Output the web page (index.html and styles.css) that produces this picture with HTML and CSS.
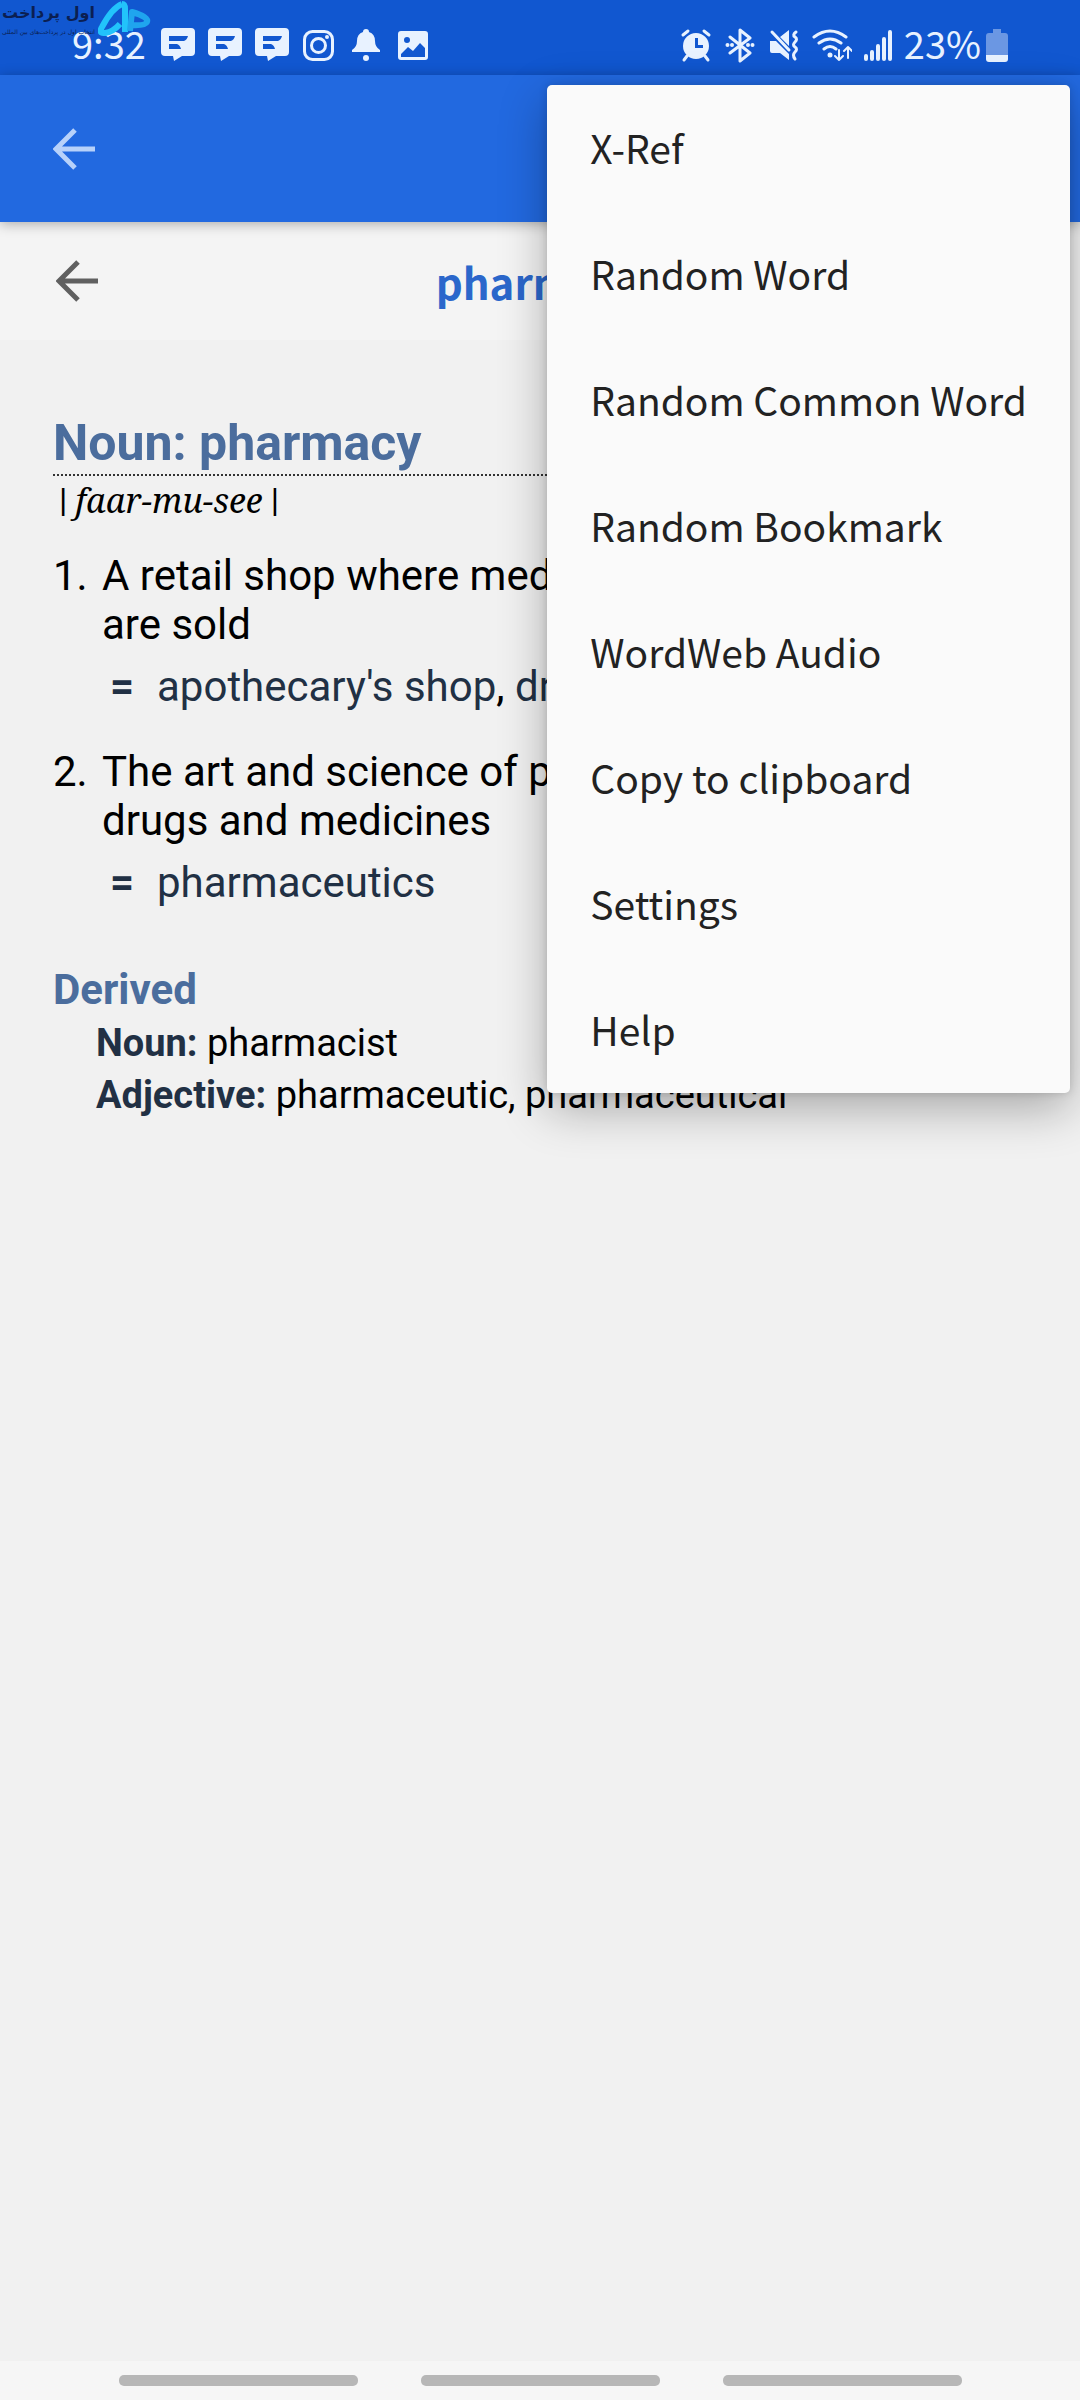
FILE: index.html
```html
<!DOCTYPE html>
<html lang="en">
<head>
  <meta charset="UTF-8">
  <meta name="viewport" content="width=device-width, initial-scale=1.0">
  <title>WordWeb - pharmacy</title>
  <link rel="stylesheet" href="styles.css">
</head>
<body>
  <div class="status-bar">
    <span class="time">9:32</span>
    <div class="notifications">
      <svg class="icon" viewBox="0 0 36 36"><path fill-rule="evenodd" d="M5 1h26q4 0 4 4v20q0 4-4 4H22l-8 5-1-5H5q-4 0-4-4V5q0-4 4-4zM9 9v5h15q3-1 4-5zM9 17v5h12q-1-4-4-5z"/></svg>
      <svg class="icon" viewBox="0 0 36 36"><path fill-rule="evenodd" d="M5 1h26q4 0 4 4v20q0 4-4 4H22l-8 5-1-5H5q-4 0-4-4V5q0-4 4-4zM9 9v5h15q3-1 4-5zM9 17v5h12q-1-4-4-5z"/></svg>
      <svg class="icon" viewBox="0 0 36 36"><path fill-rule="evenodd" d="M5 1h26q4 0 4 4v20q0 4-4 4H22l-8 5-1-5H5q-4 0-4-4V5q0-4 4-4zM9 9v5h15q3-1 4-5zM9 17v5h12q-1-4-4-5z"/></svg>
      <svg class="icon" viewBox="0 0 36 36">
        <rect class="line" x="3.5" y="4.500" width="28" height="28" rx="8"/>
        <circle class="line" cx="17.500" cy="18.500" r="7"/>
        <circle cx="26" cy="10" r="2"/>
      </svg>
      <svg class="icon" viewBox="0 0 36 36"><path d="M18 2a3 3 0 0 1 3 3q6 2 6 9 0 6 5 9v2H4v-2q5-3 5-9 0-7 6-9a3 3 0 0 1 3-3z"/><circle cx="18" cy="31" r="3"/></svg>
      <svg class="icon" viewBox="0 0 36 36"><path fill-rule="evenodd" d="M6 4h24q3 0 3 3v23q0 3-3 3H6q-3 0-3-3V7q0-3 3-3zM12 10a3 3 0 1 0 0 6 3 3 0 0 0 0-6zM6 27v3h24v-9l-5-5-7 8-5-4z"/></svg>
    </div>
    <div class="system">
      <svg class="icon alarm" viewBox="0 0 32 36">
        <path class="line" d="M3 8l5-4M29 8l-5-4M7 29l-3 4M25 29l3 4"/>
        <path fill-rule="evenodd" d="M16 6a13 13 0 1 0 0 26 13 13 0 0 0 0-26zM15 11h3v7h5v3h-8z"/>
      </svg>
      <svg class="icon bluetooth" viewBox="0 0 32 36">
        <path class="line" d="M6 10l20 16-10 8V3l10 8L6 26"/>
        <circle cx="3.500" cy="18" r="2"/><circle cx="8" cy="18" r="2"/><circle cx="24" cy="18" r="2"/><circle cx="28.500" cy="18" r="2"/>
      </svg>
      <svg class="icon mute" viewBox="0 0 32 36">
        <path d="M2 14h6l13 13v6l-9-7H4q-2 0-2-2zM12 10l9-7v16z"/>
        <path class="line" d="M4 5l17 18M28 5q-4 3-1 5t0 5 0 5 0 5 0 7"/>
      </svg>
      <svg class="icon wifi" viewBox="0 0 40 36">
        <path class="line" d="M2 10q16-12 32 0M7 16q11-8 22 0M12 22q6-5 12 0"/>
        <circle cx="18" cy="28" r="2.500"/>
        <path class="thin" d="M27 23v10M23 29l4 4 4-4M36 31V20M32 24l4-4 4 4"/>
      </svg>
      <svg class="icon signal" viewBox="0 0 28 36"><path class="line bold" d="M2 29v3M8 25v7M14 19v13M20 12v20M26 5v27"/></svg>
      <div class="charge">
        <span class="percent">23%</span>
        <svg class="icon battery" viewBox="0 0 22 36">
          <path class="empty" d="M7 2h8v4h4q3 0 3 3v19H0V9q0-3 3-3h4z"/>
          <path d="M0 28h22v4q0 3-3 3H3q-3 0-3-3z"/>
        </svg>
      </div>
    </div>
    <div class="watermark">
      <div class="watermark-text" lang="fa" dir="rtl">
        <span class="watermark-name">اول پرداخت</span>
        <span class="watermark-tagline">انتخاب اول در پرداخت‌های بین المللی</span>
      </div>
      <svg class="watermark-logo" viewBox="0 0 54 38">
        <path class="loop" d="M24 4q3 0 3 5v23M24 4Q14 8 4 27q-4 7 3 6 8-1 15-9"/>
        <path class="loop dark" d="M32 31l2-19q17 5 15 10-2 4-16 3"/>
      </svg>
    </div>
  </div>

  <header class="app-bar">
    <button class="back" aria-label="Back">
      <svg viewBox="0 0 42 42"><path d="M22 2L3 21l19 19M4 21h38"/></svg>
    </button>
  </header>

  <div class="word-bar">
    <button class="back" aria-label="Previous word">
      <svg viewBox="0 0 42 42"><path d="M22 2L3 21l19 19M4 21h38"/></svg>
    </button>
    <h1>pharmacy</h1>
  </div>

  <main class="entry">
    <h2>Noun: pharmacy</h2>
    <p class="pronunciation"><span>|</span><i>faar-mu-see</i><span>|</span></p>
    <ol class="senses">
      <li>
        <p>A retail shop where medicine and other articles are sold</p>
        <p class="synonyms"><b>=</b><span><a href="#">apothecary's shop</a>, <a href="#">drugstore</a></span></p>
      </li>
      <li>
        <p>The art and science of preparing and dispensing drugs and medicines</p>
        <p class="synonyms"><b>=</b><span><a href="#">pharmaceutics</a></span></p>
      </li>
    </ol>
    <h3>Derived</h3>
    <div class="derived">
      <p><b>Noun:</b> pharmacist</p>
      <p><b>Adjective:</b> pharmaceutic, pharmaceutical</p>
    </div>
  </main>

  <nav class="nav-bar">
    <button aria-label="Recent apps"></button>
    <button aria-label="Home"></button>
    <button aria-label="Go back"></button>
  </nav>

  <div class="menu" role="menu">
    <button role="menuitem">X-Ref</button>
    <button role="menuitem">Random Word</button>
    <button role="menuitem">Random Common Word</button>
    <button role="menuitem">Random Bookmark</button>
    <button role="menuitem">WordWeb Audio</button>
    <button role="menuitem">Copy to clipboard</button>
    <button role="menuitem">Settings</button>
    <button role="menuitem">Help</button>
  </div>
</body>
</html>
```
FILE: styles.css
```css
* {
  margin: 0;
  padding: 0;
  box-sizing: border-box;
}

body {
  position: relative;
  display: flex;
  flex-direction: column;
  min-height: 100vh;
  background-color: #f1f1f1;
  color: #000;
  font-family: Roboto, sans-serif;
  font-size: 42px;
  line-height: 49px;
}

button {
  border: none;
  background: none;
  cursor: pointer;
}

a {
  color: #213044;
  text-decoration: none;
}

/* Status bar */
.status-bar {
  position: relative;
  display: flex;
  align-items: center;
  gap: 14px;
  height: 75px;
  padding: 15px 72px 0;
  background-color: #1157d0;
  color: #e8f2ff;
  font-family: "Noto Sans CJK SC", sans-serif;
  font-size: 38px;
  line-height: 44px;
}

.time, .percent {
  padding-bottom: 4px;
}

.notifications {
  display: flex;
  gap: 11px;
}

.system {
  display: flex;
  align-items: center;
  gap: 12px;
  margin-left: auto;
}

.charge {
  display: flex;
  align-items: center;
  gap: 5px;
}

.icon {
  width: 36px;
  height: 36px;
  fill: #e8f2ff;
}

.alarm, .bluetooth, .mute {
  width: 32px;
}

.wifi {
  width: 40px;
}

.signal {
  width: 28px;
}

.battery {
  width: 22px;
}

.line, .thin {
  fill: none;
  stroke: #e8f2ff;
  stroke-width: 3;
  stroke-linecap: round;
  stroke-linejoin: round;
}

.thin {
  stroke-width: 2;
}

.bold {
  stroke-width: 4;
}

.empty {
  fill: #6b97e3;
}

/* Watermark over the status bar */
.watermark {
  position: absolute;
  top: 0;
  left: 2px;
  display: flex;
  gap: 3px;
}

.watermark-text {
  display: flex;
  flex-direction: column;
  width: 93px;
  color: #0b1f52;
  font-family: "DejaVu Sans", sans-serif;
  white-space: nowrap;
}

.watermark-name {
  font-size: 16px;
  font-weight: bold;
  line-height: 26px;
}

.watermark-tagline {
  font-size: 6px;
  line-height: 12px;
}

.watermark-logo {
  width: 54px;
  height: 38px;
}

.loop {
  fill: none;
  stroke: #22c3fb;
  stroke-width: 6;
  stroke-linejoin: round;
}

.dark {
  stroke: #1fa5ee;
}

/* Top bars */
.app-bar {
  position: relative;
  display: flex;
  align-items: center;
  height: 147px;
  padding: 0 53px;
  background-color: #2269e0;
  box-shadow: 0 2px 12px rgba(0, 0, 0, 0.3);
}

.word-bar {
  display: grid;
  grid-template-columns: 1fr auto 1fr;
  align-items: center;
  height: 118px;
  padding: 0 56px;
  background-color: #f4f4f4;
}

.back {
  width: 42px;
  height: 42px;
}

.back svg {
  display: block;
  fill: none;
  stroke: #b7d1fa;
  stroke-width: 5;
}

.word-bar .back svg {
  stroke: #606060;
}

h1 {
  color: #2b67cb;
  font-family: "Noto Sans CJK SC", sans-serif;
  font-size: 42px;
  font-weight: 700;
}

/* Dictionary entry */
.entry {
  flex: 1;
  padding: 72px 53px;
}

h2 {
  border-bottom: 2px dotted #333;
  color: #4b6d9d;
  font-size: 50px;
  line-height: 62px;
}

.pronunciation {
  display: flex;
  gap: 8px;
  padding-left: 6px;
  font-size: 34px;
}

.pronunciation i {
  font-family: "Noto Serif", "Liberation Serif", serif;
}

.senses {
  margin-top: 26px;
  list-style: none;
  counter-reset: sense;
}

.senses li {
  display: grid;
  grid-template-columns: 49px 1fr;
  margin-bottom: 36px;
  counter-increment: sense;
}

.senses li::before {
  content: counter(sense) ".";
}

.synonyms {
  display: grid;
  grid-template-columns: 47px 1fr;
  grid-column: 2;
  margin-top: 13px;
  padding-left: 8px;
}

.synonyms b, .derived b {
  color: #213044;
}

h3 {
  margin-top: 58px;
  color: #4b6d9d;
  font-size: 42px;
}

.derived {
  padding: 3px 0 0 43px;
  font-size: 38px;
  line-height: 52px;
}

/* Overflow menu */
.menu {
  position: absolute;
  top: 85px;
  right: 10px;
  display: flex;
  flex-direction: column;
  min-width: 522px;
  border-radius: 5px;
  background-color: #fafafa;
  box-shadow: 0 16px 48px rgba(0, 0, 0, 0.3), 0 0 8px rgba(0, 0, 0, 0.15);
}

.menu button {
  height: 126px;
  padding: 0 43px 2px;
  color: #222;
  font-family: "Noto Sans CJK SC", sans-serif;
  font-size: 39px;
  text-align: left;
  white-space: nowrap;
}

/* System navigation */
.nav-bar {
  display: flex;
  align-items: center;
  justify-content: center;
  gap: 63px;
  height: 39px;
  background-color: #f6f6f6;
}

.nav-bar button {
  width: 239px;
  height: 11px;
  border-radius: 5px;
  background-color: #b7b7b7;
}
```
